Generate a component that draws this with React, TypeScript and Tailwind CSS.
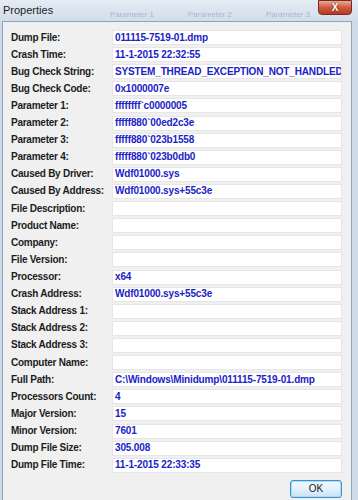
import React from 'react';

const rows: [string, string][] = [
  ['Dump File:', '011115-7519-01.dmp'],
  ['Crash Time:', '11-1-2015 22:32:55'],
  ['Bug Check String:', 'SYSTEM_THREAD_EXCEPTION_NOT_HANDLED'],
  ['Bug Check Code:', '0x1000007e'],
  ['Parameter 1:', 'ffffffff`c0000005'],
  ['Parameter 2:', 'fffff880`00ed2c3e'],
  ['Parameter 3:', 'fffff880`023b1558'],
  ['Parameter 4:', 'fffff880`023b0db0'],
  ['Caused By Driver:', 'Wdf01000.sys'],
  ['Caused By Address:', 'Wdf01000.sys+55c3e'],
  ['File Description:', ''],
  ['Product Name:', ''],
  ['Company:', ''],
  ['File Version:', ''],
  ['Processor:', 'x64'],
  ['Crash Address:', 'Wdf01000.sys+55c3e'],
  ['Stack Address 1:', ''],
  ['Stack Address 2:', ''],
  ['Stack Address 3:', ''],
  ['Computer Name:', ''],
  ['Full Path:', 'C:\\Windows\\Minidump\\011115-7519-01.dmp'],
  ['Processors Count:', '4'],
  ['Major Version:', '15'],
  ['Minor Version:', '7601'],
  ['Dump File Size:', '305.008'],
  ['Dump File Time:', '11-1-2015 22:33:35'],
];

const App: React.FC = () => {
  return (
    <div
      className="w-[358px] h-[500px] overflow-hidden bg-[#cfdbe8] flex flex-col"
      style={{ fontFamily: '"Liberation Sans", Arial, sans-serif' }}
    >
      {/* Title bar */}
      <div className="relative h-[21px] shrink-0 bg-gradient-to-b from-[#e4ecf4] to-[#d2dde9]">
        <span className="absolute left-[3px] top-[5px] text-[11px] leading-none text-[#1e1e1e]">Properties</span>
        {/* faded columns behind the glass */}
        <span className="absolute left-[110px] top-[11px] text-[8px] leading-none text-[#a8b7c7] blur-[0.6px]">Parameter 1</span>
        <span className="absolute left-[188px] top-[11px] text-[8px] leading-none text-[#a8b7c7] blur-[0.6px]">Parameter 2</span>
        <span className="absolute left-[266px] top-[11px] text-[8px] leading-none text-[#a8b7c7] blur-[0.6px]">Parameter 3</span>
        <div className="absolute left-[318px] top-0 w-[34px] h-[15px] rounded-b-[4px] border border-[#7a2a1e] bg-gradient-to-b from-[#e9a99a] via-[#cf5a42] to-[#b83a22] flex items-center justify-center">
          <span className="text-[10px] font-bold text-white leading-none" style={{ textShadow: '0 0 2px #5a1208' }}>
            X
          </span>
        </div>
      </div>

      {/* Client area */}
      <div className="flex-1 min-h-0 ml-[2px] mr-[6px] border-t border-l border-r border-[#8fa3b8] bg-[#f0f0f0] flex">
        <div className="flex-1 min-w-0 pl-[8px] pr-[9px] pt-[8px] flex flex-col">
          <div className="flex flex-col gap-[2.12px]">
            {rows.map(([label, value]) => (
              <div key={label} className="flex items-center h-[15px]">
                <div className="w-[101px] shrink-0 text-[10px] tracking-[-0.25px] leading-none font-bold text-[#1c1c1c] whitespace-nowrap">
                  {label}
                </div>
                <div className="flex-1 min-w-0 h-[15px] bg-white border border-[#e6e6e6] flex items-center pl-[2px] overflow-hidden">
                  <span className="text-[10px] tracking-[-0.15px] leading-none font-bold text-[#1a22c8] whitespace-nowrap">{value}</span>
                </div>
              </div>
            ))}
          </div>
          <div className="flex justify-end mt-[7px]">
            <button className="w-[52px] h-[18px] rounded-[3px] border border-[#3c8fd0] bg-gradient-to-b from-[#f2f9fd] via-[#e2f1fb] to-[#c8e3f5] text-[10px] text-[#222] leading-none shadow-[inset_0_0_0_1px_#a9dcf6]">
              OK
            </button>
          </div>
        </div>
      </div>
    </div>
  );
};

export default App;
